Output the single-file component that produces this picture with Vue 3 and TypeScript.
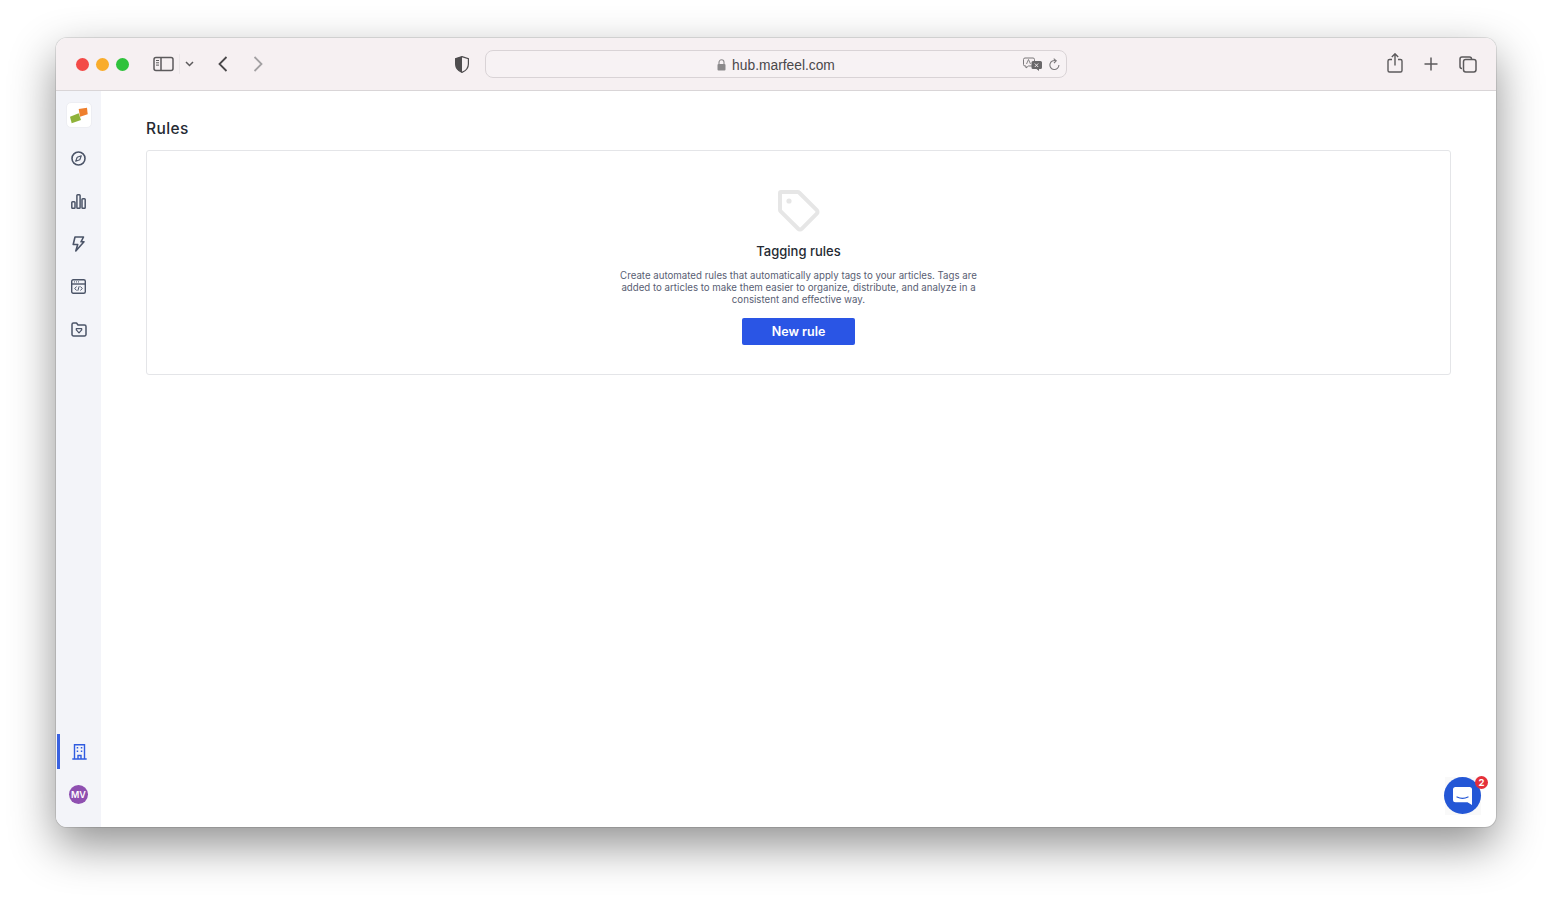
<script setup lang="ts">
const description = 'Create automated rules that automatically apply tags to your articles. Tags are added to articles to make them easier to organize, distribute, and analyze in a consistent and effective way.'
</script>

<template>
  <div class="stage">
    <div class="window">
      <header class="toolbar">
        <div class="lights">
          <span class="light red"></span>
          <span class="light amber"></span>
          <span class="light green"></span>
        </div>
        <svg class="tb sidebar-toggle" width="21" height="16" viewBox="0 0 21 16" fill="none" stroke="#5c5a5c" stroke-width="1.5">
          <rect x="1" y="1.5" width="19" height="13" rx="2" />
          <path d="M8 1.5v13" />
          <path d="M3 4.5h3M3 6.800h3M3 9.100h3" stroke-width="1" />
        </svg>
        <span class="divider"></span>
        <svg class="tb chevron" width="9" height="6" viewBox="0 0 9 6" fill="none" stroke="#5c5a5c" stroke-width="1.500">
          <path d="M1 1l3.500 3.500L8 1" />
        </svg>
        <svg class="tb back" width="10" height="16" viewBox="0 0 10 16" fill="none" stroke="#4a484a" stroke-width="1.800">
          <path d="M8.500 1L1.500 8l7 7" />
        </svg>
        <svg class="tb forward" width="10" height="16" viewBox="0 0 10 16" fill="none" stroke="#a3a1a3" stroke-width="1.800">
          <path d="M1.500 1l7 7-7 7" />
        </svg>
        <svg class="tb shield" width="14" height="17" viewBox="0 0 14 17">
          <path d="M7 .6L13.400 2.600V8c0 4-2.800 6.900-6.400 8.400C3.400 14.900.6 12 .6 8V2.600z" fill="#f6f0f2" stroke="#4f4d4f" stroke-width="1.200" />
          <path d="M7 .6V16.400C3.400 14.900.6 12 .6 8V2.600z" fill="#4f4d4f" />
        </svg>
        <div class="address">
          <svg class="lock" width="9" height="12" viewBox="0 0 9 12">
            <path d="M2 5V3.300a2.500 2.500 0 015 0V5" fill="none" stroke="#8b898b" stroke-width="1.100" />
            <rect x=".5" y="5" width="8" height="6.500" rx="1" fill="#8b898b" />
          </svg>
          <span class="host">hub.marfeel.com</span>
          <span class="address-end">
            <svg width="20" height="14" viewBox="0 0 20 14">
              <path d="M2 1h8a1.500 1.500 0 011.500 1.500v5A1.500 1.500 0 0110 9H5.500L3 11V9H2A1.500 1.500 0 01.5 7.500v-5A1.500 1.500 0 012 1z" fill="#f6f0f2" stroke="#7b797b" />
              <path d="M3.500 7l2-4.500 2 4.500" fill="none" stroke="#7b797b" stroke-width=".9" />
              <path d="M10 4h7.500A1.500 1.500 0 0119 5.500v5a1.500 1.500 0 01-1.500 1.500H16v2l-2.500-2H10a1.500 1.500 0 01-1.500-1.500v-5A1.500 1.500 0 0110 4z" fill="#6a686a" />
              <path d="M11.800 6.500l3.400 3.500M15.200 6.500l-3.400 3.500" stroke="#f6f0f2" stroke-width=".9" />
            </svg>
            <svg width="11" height="13" viewBox="0 0 11 13" fill="none" stroke="#7b797b" stroke-width="1.100">
              <path d="M7 2.800A4.500 4.500 0 109.900 7" />
              <path d="M4.700.7L7.200 2.800 5 5" />
            </svg>
          </span>
        </div>
        <svg class="tb share" width="16" height="20" viewBox="0 0 16 20" fill="none" stroke="#5c5a5c" stroke-width="1.400">
          <path d="M5 6.500H2.500A1.500 1.500 0 001 8v9.500A1.500 1.500 0 002.500 19h11a1.500 1.500 0 001.500-1.500V8a1.500 1.500 0 00-1.500-1.500H11" />
          <path d="M8 12.500V1M4.800 4L8 .8 11.200 4" />
        </svg>
        <svg class="tb plus" width="14" height="14" viewBox="0 0 14 14" stroke="#5c5a5c" stroke-width="1.500">
          <path d="M7 .5v13M.5 7h13" />
        </svg>
        <svg class="tb tabs" width="18" height="17" viewBox="0 0 18 17" fill="none" stroke="#5c5a5c" stroke-width="1.500">
          <path d="M3 12.500A2 2 0 011 10.500V3a2 2 0 012-2h7.500a2 2 0 012 2" />
          <rect x="4.500" y="3.500" width="12.500" height="12.500" rx="2.200" />
        </svg>
      </header>

      <div class="body">
        <aside class="rail">
          <div class="rail-top">
            <div class="logo">
              <svg width="20" height="18" viewBox="0 0 20 18">
                <path d="M9.700 3L18 1.700l.7 6.600L11 10.700z" fill="#ee7f2d" />
                <path d="M1 10.700L9.700 7.300 12 14l-9.300 3.300z" fill="#8fb23a" />
              </svg>
            </div>
            <div class="rail-item">
              <svg width="15" height="15" viewBox="0 0 15 15" fill="none" stroke="#4b5468" stroke-width="1.600">
                <circle cx="7.500" cy="7.500" r="6.500" />
                <path d="M10.300 4.700L8.800 8.800 4.700 10.300 6.200 6.200z" stroke-width="1.100" stroke-linejoin="round" />
              </svg>
            </div>
            <div class="rail-item">
              <svg width="15" height="15" viewBox="0 0 15 15" fill="none" stroke="#4b5468" stroke-width="1.500">
                <rect x=".8" y="7.700" width="3.200" height="6.500" rx=".8" />
                <rect x="5.900" y=".8" width="3.200" height="13.400" rx=".8" />
                <rect x="11" y="4.700" width="3.200" height="9.500" rx=".8" />
              </svg>
            </div>
            <div class="rail-item">
              <svg width="13" height="16" viewBox="0 0 13 16" fill="none" stroke="#4b5468" stroke-width="1.600" stroke-linejoin="round">
                <path d="M3 1h8.500L9 5.800h3L3.800 15l1.900-6.500H1.200z" />
              </svg>
            </div>
            <div class="rail-item">
              <svg width="15" height="15" viewBox="0 0 15 15" fill="none" stroke="#4b5468" stroke-width="1.400">
                <rect x=".7" y=".7" width="13.600" height="13.600" rx="1.500" />
                <path d="M.7 5h13.600" />
                <path d="M3 2.900h1M5 2.900h1M7 2.900h1" stroke-width="1" />
                <path d="M5.500 7.500L3.800 9.500l1.700 2M9.500 7.500l1.700 2-1.700 2M8.200 7.200l-1.400 4.600" stroke-width="1" />
              </svg>
            </div>
            <div class="rail-item">
              <svg width="16" height="15" viewBox="0 0 16 15" fill="none" stroke="#4b5468" stroke-width="1.500" stroke-linejoin="round">
                <path d="M1 2.500A1.500 1.500 0 012.500 1h3L7 3h6.500A1.500 1.500 0 0115 4.500v8a1.500 1.500 0 01-1.500 1.500h-11A1.500 1.500 0 011 12.500z" />
                <path d="M5.300 6.700h5.400v1.200L8 10.800 5.300 7.900z" stroke-width="1.200" />
              </svg>
            </div>
          </div>
          <div class="rail-bottom">
            <div class="rail-item active">
              <svg width="15" height="16" viewBox="0 0 15 16" fill="none" stroke="#2f5be0" stroke-width="1.400">
                <path d="M2.500 15V.8h10V15M.3 15h14.400" />
                <path d="M6 15v-3.500h3V15" />
                <path d="M4.700 3h1.500v1.500H4.700zM8.800 3h1.500v1.500H8.800zM4.700 6.500h1.500V8H4.700zM8.800 6.500h1.500V8H8.800z" fill="#2f5be0" stroke="none" />
              </svg>
            </div>
            <div class="avatar">MV</div>
          </div>
        </aside>

        <main class="content">
          <h1 class="title">Rules</h1>
          <section class="card">
            <svg class="tag" width="42" height="42" viewBox="0 0 42 42" fill="none" stroke="#e6e6e6" stroke-width="4" stroke-linejoin="round">
              <path d="M3 2h16.500a2.500 2.500 0 011.800.7l17.500 17.500a2.500 2.500 0 010 3.500L23.700 38.800a2.500 2.500 0 01-3.500 0L2.700 21.300A2.500 2.500 0 012 19.500V3a1 1 0 011-1z" />
              <circle cx="11" cy="11" r="2.600" fill="#e6e6e6" stroke="none" />
            </svg>
            <h2 class="card-title">Tagging rules</h2>
            <p class="card-text">{{ description }}</p>
            <button class="primary" type="button">New rule</button>
          </section>
        </main>
      </div>

      <div class="chat-wrap">
        <div class="chat">
          <svg width="19" height="18" viewBox="0 0 19 18">
            <path d="M2.500 0h14A2.500 2.500 0 0119 2.500V18l-4.500-2.700h-12A2.500 2.500 0 010 12.800V2.500A2.500 2.500 0 012.500 0z" fill="#fff" />
            <path d="M4 10c3.300 1.700 7.700 1.700 11 0" fill="none" stroke="#2457d6" stroke-width="1.200" stroke-linecap="round" />
          </svg>
          <span class="badge">2</span>
        </div>
      </div>
    </div>
  </div>
</template>

<style>
html,
body {
  margin: 0;
  background: #fff;
  overflow: hidden;
}
</style>

<style scoped>
.stage {
  box-sizing: border-box;
  width: 1552px;
  height: 902px;
  padding: 38px 56px 0;
  font-family: Inter, "Liberation Sans", sans-serif;
}
.window {
  position: relative;
  display: flex;
  flex-direction: column;
  width: 1440px;
  height: 789px;
  border-radius: 11px;
  overflow: hidden;
  background: #fff;
  box-shadow: 0 0 0 1px rgba(0, 0, 0, 0.1), 0 18px 46px rgba(0, 0, 0, 0.44);
}
.toolbar {
  display: flex;
  align-items: center;
  flex: none;
  box-sizing: border-box;
  height: 53px;
  padding-left: 20px;
  background: #f6f0f2;
  border-bottom: 1px solid #d9d5d7;
}
.lights {
  display: flex;
  gap: 7px;
}
.light {
  width: 13px;
  height: 13px;
  border-radius: 50%;
}
.red { background: #f34a47; }
.amber { background: #f9ac2a; }
.green { background: #2fc23c; }
.tb {
  flex: none;
  display: block;
}
.sidebar-toggle { margin-left: 24px; }
.divider {
  width: 1px;
  height: 20px;
  margin-left: 5px;
  background: #ebe6e8;
}
.chevron { margin-left: 5px; }
.back { margin-left: 24px; }
.forward { margin-left: 25px; }
.shield { margin-left: 192px; }
.address {
  position: relative;
  display: flex;
  align-items: center;
  justify-content: center;
  gap: 6px;
  box-sizing: border-box;
  width: 582px;
  height: 28px;
  margin-left: 16px;
  margin-right: 1px;
  border: 1px solid #d9d3d6;
  border-radius: 8px;
  background: #f7f2f4;
}
.lock { margin-top: 1px; }
.host {
  padding-top: 2px;
  font-family: "Liberation Sans", Arial, sans-serif;
  font-size: 13.800px;
  color: #4a484a;
}
.address-end {
  position: absolute;
  right: 6px;
  top: 6px;
  display: flex;
  align-items: center;
  gap: 6px;
}
.share { margin-left: 319px; margin-top: -2px; }
.plus { margin-left: 21px; }
.tabs { margin-left: 21px; }
.body {
  display: flex;
  flex: 1;
  min-height: 0;
}
.rail {
  display: flex;
  flex-direction: column;
  justify-content: space-between;
  flex: none;
  width: 45px;
  padding: 11px 0 23px;
  box-sizing: border-box;
  background: #f3f4f9;
}
.rail-top,
.rail-bottom {
  display: flex;
  flex-direction: column;
  align-items: center;
}
.logo {
  display: flex;
  align-items: center;
  justify-content: center;
  box-sizing: border-box;
  width: 26px;
  height: 26px;
  margin-bottom: 9px;
  border: 1px solid #edeef3;
  border-radius: 5px;
  background: #fff;
}
.rail-item {
  display: flex;
  align-items: center;
  justify-content: center;
  align-self: stretch;
  height: 42.750px;
}
.rail-bottom .rail-item {
  height: 35px;
  margin-bottom: 16px;
  margin-left: 1px;
  border-left: 3px solid transparent;
  box-sizing: border-box;
  padding-right: 3px;
}
.rail-item.active {
  border-left-color: #3a62e0;
}
.avatar {
  display: flex;
  align-items: center;
  justify-content: center;
  width: 19px;
  height: 19px;
  border-radius: 50%;
  background: #8e4fb0;
  color: #fff;
  font-size: 9px;
  font-weight: 600;
}
.content {
  flex: 1;
  min-width: 0;
  box-sizing: border-box;
  padding: 27px 45px 0;
}
.title {
  margin: 0 0 12px;
  padding-top: 1px;
  font-size: 15.500px;
  line-height: 19px;
  font-weight: 500;
  letter-spacing: 0.4px;
  color: #252a33;
}
.card {
  display: flex;
  flex-direction: column;
  align-items: center;
  box-sizing: border-box;
  height: 225px;
  padding-top: 39px;
  border: 1px solid #e4e5e8;
  border-radius: 3px;
}
.tag { display: block; }
.card-title {
  margin: 10px 0 0;
  font-size: 13px;
  line-height: 18px;
  font-weight: 500;
  color: #252a33;
}
.card-text {
  width: 372px;
  margin: 10px 0 0;
  font-size: 9.700px;
  line-height: 12px;
  text-align: center;
  color: #596073;
}
.primary {
  width: 113px;
  height: 27px;
  margin-top: 12px;
  padding: 0;
  border: 0;
  border-radius: 2px;
  background: #2a55e5;
  color: #fff;
  font-family: inherit;
  font-size: 12.500px;
  font-weight: 600;
}
.chat-wrap {
  position: absolute;
  left: 1389px;
  top: 739px;
  width: 36px;
  height: 38px;
  background: #f9f9f9;
}
.chat {
  position: absolute;
  left: -1px;
  top: 0;
  display: flex;
  align-items: center;
  justify-content: center;
  width: 37px;
  height: 37px;
  border-radius: 50%;
  background: #2457d6;
}
.badge {
  position: absolute;
  right: -7px;
  top: -1px;
  width: 13px;
  height: 13px;
  border-radius: 50%;
  background: #e5303a;
  color: #fff;
  font-size: 9.500px;
  font-weight: 700;
  line-height: 13px;
  text-align: center;
}
</style>
